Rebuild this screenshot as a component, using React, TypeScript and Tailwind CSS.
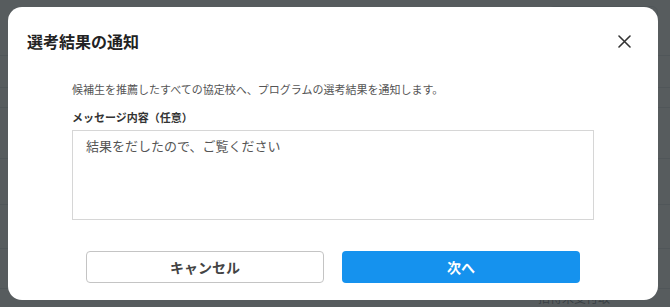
import React from 'react';

const font = { fontFamily: '"Noto Sans CJK JP", "Noto Sans", sans-serif' };

const App: React.FC = () => {
  return (
    <div className="relative w-[670px] h-[307px] overflow-hidden bg-white" style={font}>
      {/* Page behind the overlay */}
      <div className="flex flex-col w-full h-full">
        <div className="h-[56px] border-b border-gray-300 flex items-start justify-end pr-[12px] pt-[6px]">
          <div className="w-[110px] h-[30px] border border-gray-300 rounded-md" />
        </div>
        <div className="h-[32px] border-b border-gray-300" />
        <div className="h-[20px] border-b border-gray-300" />
        <div className="h-[52px] border-b border-gray-300" />
        <div className="h-[46px] border-b border-gray-300" />
        <div className="h-[44px] border-b border-gray-300" />
        <div className="h-[40px] border-b border-gray-300" />
        <div className="flex-1 flex justify-end pr-[60px] text-[12px] text-gray-700">招待未受付取</div>
      </div>

      {/* Overlay */}
      <div className="absolute inset-0 bg-[#3a3f42]/85" />

      {/* Dialog */}
      <div className="absolute left-[8px] top-[7px] w-[650px] h-[293px] bg-white rounded-[14px] flex flex-col">
        <div className="flex items-center justify-between pl-[19px] pr-[26px] pt-[24px]">
          <h2 className="text-[16px] font-bold text-[#222] leading-[20px]">選考結果の通知</h2>
          <button className="w-[16px] h-[16px] flex items-center justify-center text-[#333]">
            <svg width="13" height="13" viewBox="0 0 13 13" fill="none" stroke="currentColor" strokeWidth="1.6" strokeLinecap="round">
              <path d="M1 1 L12 12 M12 1 L1 12" />
            </svg>
          </button>
        </div>

        <div className="pl-[64px] pr-[64px] pt-[30px] flex flex-col">
          <p className="text-[11px] text-[#555] leading-[16px]">
            候補生を推薦したすべての協定校へ、プログラムの選考結果を通知します。
          </p>
          <label className="mt-[12px] text-[11px] font-bold text-[#333] leading-[16px]">メッセージ内容（任意）</label>
          <div className="mt-[5px] w-[522px] h-[90px] border border-[#d6d6d6] px-[13px] pt-[6px] text-[13px] text-[#555] leading-[18px]">
            結果をだしたので、ご覧ください
          </div>
        </div>

        <div className="flex gap-[18px] pl-[78px] pt-[31px]">
          <button className="w-[238px] h-[32px] border border-[#c4c4c4] rounded-[4px] text-[14px] font-bold text-[#444] bg-white">
            キャンセル
          </button>
          <button className="w-[238px] h-[32px] rounded-[4px] text-[14px] font-bold text-white bg-[#1592ee]">
            次へ
          </button>
        </div>
      </div>
    </div>
  );
};

export default App;
